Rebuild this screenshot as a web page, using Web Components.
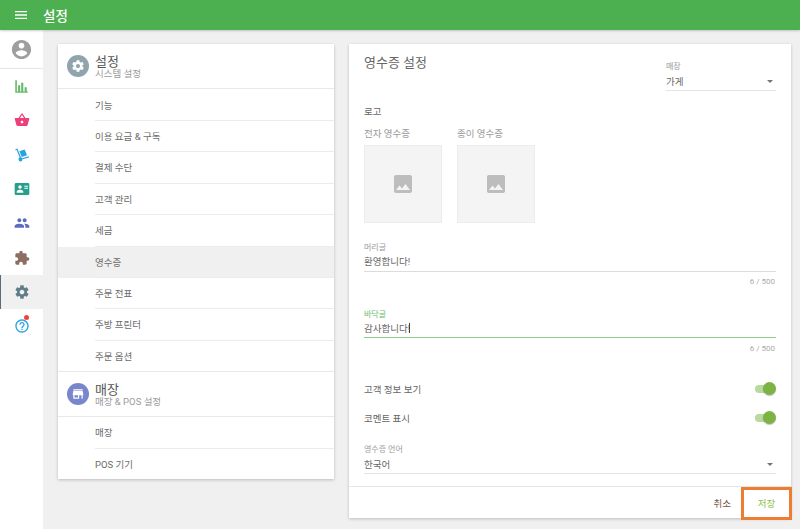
<!DOCTYPE html>
<html lang="ko">
<head>
<meta charset="utf-8">
<title>설정</title>
<style>
  html, body {
    margin: 0;
    height: 100%;
    overflow: hidden;
    background: #f0f0f0;
    font-family: "Roboto", "Noto Sans CJK KR", sans-serif;
  }
</style>
</head>
<body>

<app-shell>
  <app-toolbar slot="top" title="설정"></app-toolbar>
  <side-nav slot="side"></side-nav>
  <settings-menu slot="left"></settings-menu>
  <receipt-form slot="right"></receipt-form>
</app-shell>

<script>
const ICONS = {
  menu: "M3 18h18v-2H3v2zm0-5h18v-2H3v2zm0-7v2h18V6H3z",
  account: "M12 2C6.48 2 2 6.48 2 12s4.48 10 10 10 10-4.48 10-10S17.52 2 12 2zm0 3c1.66 0 3 1.34 3 3s-1.34 3-3 3-3-1.34-3-3 1.34-3 3-3zm0 14.2c-2.5 0-4.71-1.28-6-3.22.03-1.99 4-3.08 6-3.08 1.99 0 5.97 1.09 6 3.08-1.29 1.94-3.5 3.22-6 3.22z",
  basket: "M17.21 9l-4.38-6.56c-.19-.28-.51-.42-.83-.42-.32 0-.64.14-.83.43L6.79 9H2c-.55 0-1 .45-1 1 0 .09.01.18.04.27l2.54 9.27c.23.84 1 1.46 1.92 1.46h13c.92 0 1.69-.62 1.93-1.46l2.54-9.27L23 10c0-.55-.45-1-1-1h-4.79zM9 9l3-4.4L15 9H9zm3 8c-1.1 0-2-.9-2-2s.9-2 2-2 2 .9 2 2-.9 2-2 2z",
  people: "M16 11c1.66 0 2.99-1.34 2.99-3S17.66 5 16 5c-1.66 0-3 1.34-3 3s1.34 3 3 3zm-8 0c1.66 0 2.99-1.34 2.99-3S9.66 5 8 5C6.34 5 5 6.34 5 8s1.34 3 3 3zm0 2c-2.33 0-7 1.17-7 3.5V19h14v-2.5c0-2.33-4.67-3.5-7-3.5zm8 0c-.29 0-.62.02-.97.05 1.16.84 1.97 1.97 1.97 3.45V19h6v-2.5c0-2.33-4.67-3.5-7-3.5z",
  extension: "M20.5 11H19V7c0-1.1-.9-2-2-2h-4V3.5C13 2.12 11.88 1 10.5 1S8 2.12 8 3.5V5H4c-1.1 0-1.99.9-1.99 2v3.8H3.5c1.49 0 2.7 1.21 2.7 2.7s-1.21 2.7-2.7 2.7H2V20c0 1.1.9 2 2 2h3.8v-1.5c0-1.49 1.21-2.7 2.7-2.7 1.49 0 2.7 1.21 2.7 2.7V22H17c1.1 0 2-.9 2-2v-4h1.5c1.38 0 2.5-1.12 2.5-2.5S21.88 11 20.5 11z",
  gear: "M19.43 12.98c.04-.32.07-.64.07-.98s-.03-.66-.07-.98l2.11-1.65c.19-.15.24-.42.12-.64l-2-3.46c-.12-.22-.39-.3-.61-.22l-2.49 1c-.52-.4-1.08-.73-1.69-.98l-.38-2.65C14.46 2.18 14.25 2 14 2h-4c-.25 0-.46.18-.49.42l-.38 2.65c-.61.25-1.17.59-1.69.98l-2.49-1c-.23-.09-.49 0-.61.22l-2 3.46c-.13.22-.07.49.12.64l2.11 1.65c-.04.32-.07.65-.07.98s.03.66.07.98l-2.11 1.65c-.19.15-.24.42-.12.64l2 3.46c.12.22.39.3.61.22l2.49-1c.52.4 1.08.73 1.69.98l.38 2.65c.03.24.24.42.49.42h4c.25 0 .46-.18.49-.42l.38-2.65c.61-.25 1.17-.59 1.69-.98l2.49 1c.23.09.49 0 .61-.22l2-3.46c.12-.22.07-.49-.12-.64l-2.11-1.65zM12 15.5c-1.93 0-3.5-1.57-3.5-3.5s1.57-3.5 3.5-3.5 3.5 1.57 3.5 3.5-1.57 3.5-3.5 3.5z",
  help: "M11 18h2v-2h-2v2zm1-16C6.48 2 2 6.48 2 12s4.48 10 10 10 10-4.48 10-10S17.52 2 12 2zm0 18c-4.41 0-8-3.59-8-8s3.59-8 8-8 8 3.59 8 8-3.59 8-8 8zm0-14c-2.21 0-4 1.79-4 4h2c0-1.1.9-2 2-2s2 .9 2 2c0 2-3 1.75-3 5h2c0-2.25 3-2.5 3-5 0-2.21-1.79-4-4-4z",
  store: "M20 4H4v2h16V4zm1 10v-2l-1-5H4l-1 5v2h1v6h10v-6h4v6h2v-6h1zm-9 4H6v-4h6v4z",
  image: "M21 19V5c0-1.1-.9-2-2-2H5c-1.1 0-2 .9-2 2v14c0 1.1.9 2 2 2h14c1.1 0 2-.9 2-2zM8.5 13.5l2.5 3.01L14.5 12l4.5 6H5l3.5-4.5z",
  chart: "M2 2h2.6v18H2zM2 20h20v1.8H2zM6.5 10h3.4v10H6.5zM11.5 6h3.4v14h-3.4zM17 13h3.4v7H17z",
  dolly: "M2 3.5l3-1.2 5.4 13.2a3 3 0 0 1 1.8 1.3L22 14l.5 1.8-9.8 2.7a3 3 0 1 1-4.2-2.6L4 4.6 2.6 5.2zM8 6.5l8-2.8 3.6 8.6-8 2.8z",
  card: "M3 3h18a2 2 0 0 1 2 2v14a2 2 0 0 1-2 2H3a2 2 0 0 1-2-2V5a2 2 0 0 1 2-2zm6 3.5a2.6 2.6 0 1 0 0 5.2 2.6 2.6 0 0 0 0-5.2zM4 17.5h10v-1.3c0-1.9-3.3-2.9-5-2.9s-5 1-5 2.9zM15.5 7v1.6H21V7zm0 3.2v1.6H21v-1.6z"
}

function icon(name, color, size) {
  return `<svg viewBox="0 0 24 24" width="${size}" height="${size}" fill="${color}"><path d="${ICONS[name]}"/></svg>`
}

class AppShell extends HTMLElement {
  constructor() {
    super()
    this.attachShadow({ mode: "open" })
    this.shadowRoot.innerHTML = `
      <style>
        :host { display: flex; flex-direction: column; height: 529px; }
        .body { display: flex; flex: 1; min-height: 0; }
        .content { display: flex; align-items: flex-start; gap: 15px; padding: 14px 0 0 15px; flex: 1; }
      </style>
      <slot name="top"></slot>
      <div class="body">
        <slot name="side"></slot>
        <div class="content">
          <slot name="left"></slot>
          <slot name="right"></slot>
        </div>
      </div>`
  }
}

class AppToolbar extends HTMLElement {
  constructor() {
    super()
    this.attachShadow({ mode: "open" })
    this.shadowRoot.innerHTML = `
      <style>
        :host {
          display: flex; align-items: center; height: 30px; flex: none;
          background: #4caf50; color: #fff; position: relative; z-index: 2;
          box-shadow: 0 1px 2px rgba(0,0,0,.2);
        }
        svg { margin-left: 13px; }
        span { margin-left: 14px; font-size: 13.5px; font-weight: 500; }
      </style>
      ${icon("menu", "#fff", 16)}
      <span>${this.getAttribute("title")}</span>`
  }
}

class NavIcon extends HTMLElement {
  constructor() {
    super()
    this.attachShadow({ mode: "open" })
    const active = this.hasAttribute("active")
    this.shadowRoot.innerHTML = `
      <style>
        :host {
          display: flex; align-items: center; justify-content: center; height: 34.3px;
          position: relative;
          ${active ? "background: #f0f0f0; box-shadow: inset 1px 0 0 #546e7a;" : ""}
        }
        .dot {
          position: absolute; left: 24px; top: 6px; width: 5px; height: 5px;
          border-radius: 50%; background: #f44336;
        }
      </style>
      ${icon(this.getAttribute("name"), this.getAttribute("color"), this.getAttribute("size") || 16)}
      ${this.hasAttribute("dot") ? '<span class="dot"></span>' : ""}`
  }
}

class SideNav extends HTMLElement {
  constructor() {
    super()
    this.attachShadow({ mode: "open" })
    this.shadowRoot.innerHTML = `
      <style>
        :host { display: block; width: 43px; flex: none; background: #fff; }
        .me { display: flex; align-items: center; justify-content: center; height: 38px; border-bottom: 1px solid #e6e6e6; }
      </style>
      <div class="me">${icon("account", "#9e9e9e", 23)}</div>
      <div class="list">
        <nav-icon name="chart" color="#66bb6a" size="15"></nav-icon>
        <nav-icon name="basket" color="#ec407a"></nav-icon>
        <nav-icon name="dolly" color="#29a3e0"></nav-icon>
        <nav-icon name="card" color="#26a08e"></nav-icon>
        <nav-icon name="people" color="#5c6bc0"></nav-icon>
        <nav-icon name="extension" color="#8d6e63"></nav-icon>
        <nav-icon name="gear" color="#607d8b" active></nav-icon>
        <nav-icon name="help" color="#29a3e0" dot></nav-icon>
      </div>`
  }
}

class MenuSection extends HTMLElement {
  constructor() {
    super()
    this.attachShadow({ mode: "open" })
    this.shadowRoot.innerHTML = `
      <style>
        :host { display: block; }
        .head {
          display: flex; align-items: center; gap: 6px; height: 45px; padding-left: 9px;
          border-bottom: 1px solid #e8e8e8; box-sizing: border-box;
        }
        .badge {
          width: 22px; height: 22px; border-radius: 50%; display: flex;
          align-items: center; justify-content: center;
          background: ${this.getAttribute("color")};
        }
        .title { font-size: 13px; line-height: 15px; color: #555; }
        .sub { font-size: 9.5px; line-height: 10px; color: #9a9a9a; }
        .list { padding-top: var(--list-gap, 0); }
      </style>
      <div class="head">
        <div class="badge">${icon(this.getAttribute("icon"), "#fff", 14)}</div>
        <div>
          <div class="title">${this.getAttribute("title")}</div>
          <div class="sub">${this.getAttribute("sub")}</div>
        </div>
      </div>
      <div class="list"><slot></slot></div>`
  }
}

class MenuItem extends HTMLElement {
  constructor() {
    super()
    this.attachShadow({ mode: "open" })
    this.shadowRoot.innerHTML = `
      <style>
        :host { display: block; }
        :host([active]) { background: #f0f0f0; }
        div {
          height: 31.4px; line-height: 31px; margin-left: 37px; font-size: 9.5px; color: #6b6b6b;
          box-sizing: border-box; border-bottom: 1px solid #ececec;
        }
        :host([last]) div { height: 30.4px; border-bottom: 0; }
      </style>
      <div><slot></slot></div>`
  }
}

class SettingsMenu extends HTMLElement {
  constructor() {
    super()
    this.attachShadow({ mode: "open" })
    this.shadowRoot.innerHTML = `
      <style>
        :host { display: block; width: 276px; flex: none; background: #fff; box-shadow: 0 1px 3px rgba(0,0,0,.22); }
      </style>
      <menu-section style="--list-gap:.6px" icon="gear" color="#90a4ae" title="설정" sub="시스템 설정">
        <menu-item>기능</menu-item>
        <menu-item>이용 요금 &amp; 구독</menu-item>
        <menu-item>결제 수단</menu-item>
        <menu-item>고객 관리</menu-item>
        <menu-item>세금</menu-item>
        <menu-item active>영수증</menu-item>
        <menu-item>주문 전표</menu-item>
        <menu-item>주방 프린터</menu-item>
        <menu-item last>주문 옵션</menu-item>
      </menu-section>
      <menu-section style="border-top:1px solid #e8e8e8" icon="store" color="#7986cb" title="매장" sub="매장 &amp; POS 설정">
        <menu-item>매장</menu-item>
        <menu-item last>POS 기기</menu-item>
      </menu-section>`
  }
}

class SelectField extends HTMLElement {
  constructor() {
    super()
    this.attachShadow({ mode: "open" })
    this.shadowRoot.innerHTML = `
      <style>
        :host { display: block; }
        .label { font-size: 8px; line-height: 11px; color: #999; }
        .row {
          display: flex; justify-content: space-between; align-items: center;
          height: 18px; font-size: 9.5px; color: #666; border-bottom: 1px solid #e4e4e4;
        }
        i { width: 0; height: 0; margin-right: 3px; border: 3px solid transparent; border-top: 3px solid #757575; border-bottom: 0; }
      </style>
      <div class="label">${this.getAttribute("label")}</div>
      <div class="row"><span>${this.getAttribute("value")}</span><i></i></div>`
  }
}

class TextField extends HTMLElement {
  constructor() {
    super()
    this.attachShadow({ mode: "open" })
    const focused = this.hasAttribute("focused")
    this.shadowRoot.innerHTML = `
      <style>
        :host { display: block; }
        .label { font-size: 8px; line-height: 11px; color: ${focused ? "#66bb6a" : "#999"}; }
        .value {
          height: ${focused ? 18 : 19}px; line-height: 17px; font-size: 9.5px; color: #666;
          border-bottom: 1px solid ${focused ? "#8ccf8e" : "#dcdcdc"}; box-sizing: border-box;
        }
        .caret { display: inline-block; width: 1px; height: 10px; margin-left: -1px; vertical-align: -1px; background: #444; }
        .count { text-align: right; font-size: 8px; line-height: 11px; padding: ${focused ? 5 : 4}px 1px 0 0; color: #aaa; }
      </style>
      <div class="label">${this.getAttribute("label")}</div>
      <div class="value">${this.getAttribute("value")}${focused ? '<span class="caret"></span>' : ""}</div>
      <div class="count">${this.getAttribute("count")}</div>`
  }
}

class ToggleRow extends HTMLElement {
  constructor() {
    super()
    this.attachShadow({ mode: "open" })
    this.shadowRoot.innerHTML = `
      <style>
        :host { display: flex; align-items: center; justify-content: space-between; height: 29px; font-size: 9.5px; color: #666; }
        .track { position: relative; width: 20px; height: 8px; border-radius: 4px; background: #b9d99f; margin-right: 1px; }
        .knob { position: absolute; right: -1px; top: -2.5px; width: 13px; height: 13px; border-radius: 50%; background: #7cb342; box-shadow: 0 1px 1px rgba(0,0,0,.25); }
      </style>
      <slot></slot>
      <div class="track"><div class="knob"></div></div>`
  }
}

class LogoBox extends HTMLElement {
  constructor() {
    super()
    this.attachShadow({ mode: "open" })
    this.shadowRoot.innerHTML = `
      <style>
        :host { display: block; width: 78px; }
        .label { font-size: 9.5px; line-height: 12px; color: #999; margin-bottom: 5px; }
        .box {
          height: 78px; box-sizing: border-box; background: #f4f4f4; border: 1px solid #ececec;
          display: flex; align-items: center; justify-content: center;
        }
      </style>
      <div class="label">${this.getAttribute("label")}</div>
      <div class="box">${icon("image", "#bdbdbd", 24)}</div>`
  }
}

class ReceiptForm extends HTMLElement {
  constructor() {
    super()
    this.attachShadow({ mode: "open" })
    this.shadowRoot.innerHTML = `
      <style>
        :host { display: block; width: 442px; height: 474px; flex: none; background: #fff; box-shadow: 0 1px 3px rgba(0,0,0,.22); }
        .body { height: 442px; box-sizing: border-box; padding: 11px 15px 0; }
        .top { display: flex; justify-content: space-between; height: 51px; }
        h2 { margin: 0; font-size: 13px; line-height: 15px; font-weight: 400; color: #666; }
        select-field.store { width: 110px; margin-top: 6px; }
        .logo { font-size: 9.5px; line-height: 12px; color: #666; margin-bottom: 10px; }
        .logos { display: flex; gap: 15px; margin-bottom: 19px; }
        text-field + text-field { margin-top: 22px; }
        .toggles { margin-top: 20px; }
        select-field.lang { margin-top: 12px; }
        .foot {
          display: flex; justify-content: flex-end; align-items: center; height: 32px;
          border-top: 1px solid #e6e6e6; font-size: 9.5px;
        }
        .cancel { margin-right: 10px; color: #795548; }
        .save {
          width: 51px; height: 33px; box-sizing: border-box; margin-right: -1px;
          border: 3px solid #ed7d31; display: flex; align-items: center; justify-content: center;
          color: #8bc34a; background: none;
        }
      </style>
      <div class="body">
        <div class="top">
          <h2>영수증 설정</h2>
          <select-field class="store" label="매장" value="가게"></select-field>
        </div>
        <div class="logo">로고</div>
        <div class="logos">
          <logo-box label="전자 영수증"></logo-box>
          <logo-box label="종이 영수증"></logo-box>
        </div>
        <text-field label="머리글" value="환영합니다!" count="6 / 500"></text-field>
        <text-field label="바닥글" value="감사합니다!" count="6 / 500" focused></text-field>
        <div class="toggles">
          <toggle-row>고객 정보 보기</toggle-row>
          <toggle-row>코멘트 표시</toggle-row>
        </div>
        <select-field class="lang" label="영수증 언어" value="한국어"></select-field>
      </div>
      <div class="foot">
        <span class="cancel">취소</span>
        <span class="save">저장</span>
      </div>`
  }
}

customElements.define("app-shell", AppShell)
customElements.define("app-toolbar", AppToolbar)
customElements.define("nav-icon", NavIcon)
customElements.define("side-nav", SideNav)
customElements.define("menu-item", MenuItem)
customElements.define("menu-section", MenuSection)
customElements.define("settings-menu", SettingsMenu)
customElements.define("select-field", SelectField)
customElements.define("text-field", TextField)
customElements.define("toggle-row", ToggleRow)
customElements.define("logo-box", LogoBox)
customElements.define("receipt-form", ReceiptForm)
</script>
</body>
</html>
